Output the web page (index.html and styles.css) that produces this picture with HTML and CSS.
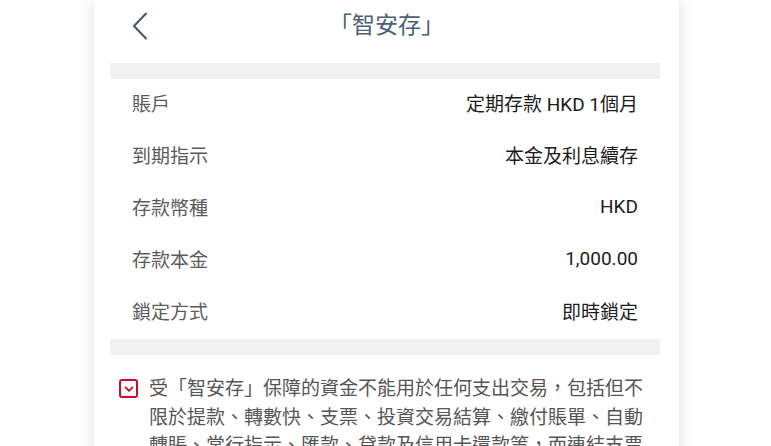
FILE: index.html
```html
<!DOCTYPE html>
<html lang="zh-Hant">
<head>
  <meta charset="UTF-8" />
  <title>「智安存」</title>
  <link rel="stylesheet" href="styles.css">
</head>
<body>
  <div class="phone">
    <!-- En-tête -->
    <header class="topbar">
      <a class="back" href="#" aria-label="返回">
        <svg width="16" height="28" viewBox="0 0 16 28">
          <path d="M14 1.5 L2 14 L14 26.5" fill="none" stroke="#3d566f" stroke-width="2" stroke-linecap="round" stroke-linejoin="round"/>
        </svg>
      </a>
      <h1>「智安存」</h1>
      <span></span>
    </header>

    <div class="content">
      <div class="strip"></div>

      <div class="details">
        <div class="row"><span class="label">賬戶</span><span class="value">定期存款 HKD 1個月</span></div>
        <div class="row"><span class="label">到期指示</span><span class="value">本金及利息續存</span></div>
        <div class="row"><span class="label">存款幣種</span><span class="value">HKD</span></div>
        <div class="row"><span class="label">存款本金</span><span class="value">1,000.00</span></div>
        <div class="row"><span class="label">鎖定方式</span><span class="value">即時鎖定</span></div>
      </div>

      <div class="strip"></div>

      <label class="consent">
        <span class="checkbox">
          <svg width="10" height="8" viewBox="0 0 10 8">
            <path d="M1.5 2.3 L5 5.8 L8.5 2.3" fill="none" stroke="#c8102e" stroke-width="1.8" stroke-linecap="round" stroke-linejoin="round"/>
          </svg>
        </span>
        <span class="consent-text">受「智安存」保障的資金不能用於任何支出交易，包括但不限於提款、轉數快、支票、投資交易結算、繳付賬單、自動轉賬、常行指示、匯款、貸款及信用卡還款等，而連結支票戶口的支票亦會被退回。</span>
      </label>
    </div>
  </div>
</body>
</html>
```

FILE: styles.css
```css
/* Page */
html, body {
  height: 100%;
  margin: 0;
  padding: 0;
  background: #fff;
  overflow: hidden;
  font-family: Roboto, "Noto Sans CJK TC", sans-serif;
}

.phone {
  width: 585px;
  min-height: 100%;
  margin-left: 94px;
  background: #fff;
  box-shadow: 0 0 14px rgba(0,0,0,0.13);
}

/* Barre du haut */
.topbar {
  display: grid;
  grid-template-columns: 1fr auto 1fr;
  align-items: start;
  height: 63px;
}
.back {
  display: block;
  width: 16px;
  margin: 12px 0 0 38px;
}
.back svg {
  display: block;
}
.topbar h1 {
  margin: 11px 0 0;
  font-size: 23px;
  line-height: 30px;
  font-weight: 400;
  color: #4a6076;
}

.content {
  margin: 0 19px 0 16px;
}

.strip {
  height: 16px;
  background: #f2f2f2;
}

/* Lignes de détail */
.row {
  box-sizing: border-box;
  display: flex;
  justify-content: space-between;
  align-items: center;
  height: 52px;
  padding: 0 22px 5px;
  font-size: 19px;
}
.label {
  color: #5b5b5b;
}
.value {
  color: #1c1c1c;
}

/* Case à cocher */
.consent {
  display: flex;
  gap: 11px;
  padding: 20px 16px 0 9px;
}
.checkbox {
  flex: none;
  display: flex;
  align-items: center;
  justify-content: center;
  width: 15px;
  height: 15px;
  margin-top: 4px;
  border: 2px solid #c8102e;
  border-radius: 3px;
}
.consent-text {
  font-size: 19px;
  line-height: 28.5px;
  color: #555;
}
```
